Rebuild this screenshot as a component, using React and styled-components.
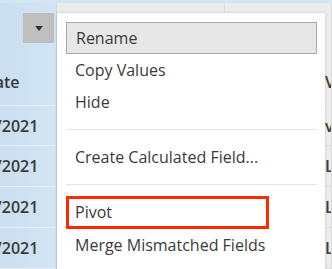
import React from "react";
import styled, { createGlobalStyle } from "styled-components";

const Global = createGlobalStyle`
  html, body {
    margin: 0;
    padding: 0;
    background: #ffffff;
  }
  body {
    width: 332px;
    height: 269px;
    overflow: hidden;
    font-family: "Open Sans", "Liberation Sans", Arial, sans-serif;
  }
`;

const Stage = styled.div`
  position: relative;
  width: 332px;
  height: 269px;
  overflow: hidden;
  background: #f2f2f2;
`;

const Grid = styled.div`
  display: grid;
  grid-template-columns: 57px 168px 107px;
  border-top: 3px solid #d4e5f3;
  height: 266px;
`;

const Column = styled.div`
  display: flex;
  flex-direction: column;
  background: ${(p) => (p.$selected ? "linear-gradient(90deg, #cadef0 0%, #d3e5f4 100%)" : "#ececec")};
  border-right: 1px solid ${(p) => (p.$selected ? "#c4d8ea" : "#dadada")};
  overflow: hidden;
`;

const HeaderCell = styled.div`
  height: 102px;
  display: flex;
  flex-direction: column;
  justify-content: space-between;
  border-bottom: 1px solid #e6eff8;
`;

const Toolbar = styled.div`
  display: flex;
  justify-content: flex-end;
  padding-top: 10px;
  padding-right: 2px;
`;

const DropButton = styled.div`
  width: 31px;
  height: 30px;
  background: #bfbfbf;
  display: flex;
  align-items: center;
  justify-content: center;
`;

const Caret = styled.span`
  width: 0;
  height: 0;
  border-left: 4.5px solid transparent;
  border-right: 4.5px solid transparent;
  border-top: 5px solid #333;
`;

const HeaderText = styled.div`
  font-size: 16px;
  font-weight: 600;
  color: #3a3a3a;
  white-space: nowrap;
  margin-left: ${(p) => p.$shift || 0}px;
  padding-bottom: 12px;
`;

const Cell = styled.div`
  height: 40px;
  display: flex;
  align-items: center;
  font-size: 16px;
  font-weight: 600;
  color: #3a3a3a;
  white-space: nowrap;
  margin-left: ${(p) => p.$shift || 0}px;
  border-bottom: 1px solid ${(p) => (p.$light ? "#e6eff8" : "#dedede")};
`;

const Menu = styled.div`
  position: absolute;
  left: 57px;
  top: 13px;
  width: 268px;
  height: 262px;
  background: #ffffff;
  box-shadow: 0 0 3px rgba(0, 0, 0, 0.18);
  padding: 9px 8px 0 9px;
  box-sizing: border-box;
  display: flex;
  flex-direction: column;
`;

const Item = styled.div`
  height: 32px;
  box-sizing: border-box;
  display: flex;
  align-items: center;
  padding-left: 9px;
  font-size: 16px;
  color: #3a3a3a;
  white-space: nowrap;
  background: ${(p) => (p.$active ? "#e7e7e7" : "transparent")};
  border: ${(p) => (p.$active ? "1.5px solid #a9a9a9" : "none")};
  ${(p) =>
    p.$marked &&
    `
    width: 203px;
    height: 33px;
    border: 3px solid #ff2a00;
    padding-left: 6px;
    padding-bottom: 2px;
  `}
`;

const Separator = styled.div`
  height: 1px;
  background: #e3e3e3;
  margin: 11px 0;
`;

const dates = ["1/7/2021", "1/7/2021", "1/7/2021", "1/7/2021"];

export default function App() {
  return (
    <>
      <Global />
      <Stage>
        <Grid>
          <Column $selected>
            <HeaderCell>
              <Toolbar>
                <DropButton>
                  <Caret />
                </DropButton>
              </Toolbar>
              <HeaderText $shift={-17}>Date</HeaderText>
            </HeaderCell>
            {dates.map((d, i) => (
              <Cell key={i} $light $shift={-29}>
                {d}
              </Cell>
            ))}
          </Column>
          <Column>
            <HeaderCell />
          </Column>
          <Column>
            <HeaderCell>
              <span />
              <HeaderText $shift={100}>Ve</HeaderText>
            </HeaderCell>
            {["ve", "Le", "Le", "Le"].map((t, i) => (
              <Cell key={i} $shift={100}>
                {t}
              </Cell>
            ))}
          </Column>
        </Grid>
        <Menu>
          <Item $active>Rename</Item>
          <Item>Copy Values</Item>
          <Item>Hide</Item>
          <Separator />
          <Item>Create Calculated Field...</Item>
          <Separator />
          <Item $marked>Pivot</Item>
          <Item>Merge Mismatched Fields</Item>
        </Menu>
      </Stage>
    </>
  );
}
